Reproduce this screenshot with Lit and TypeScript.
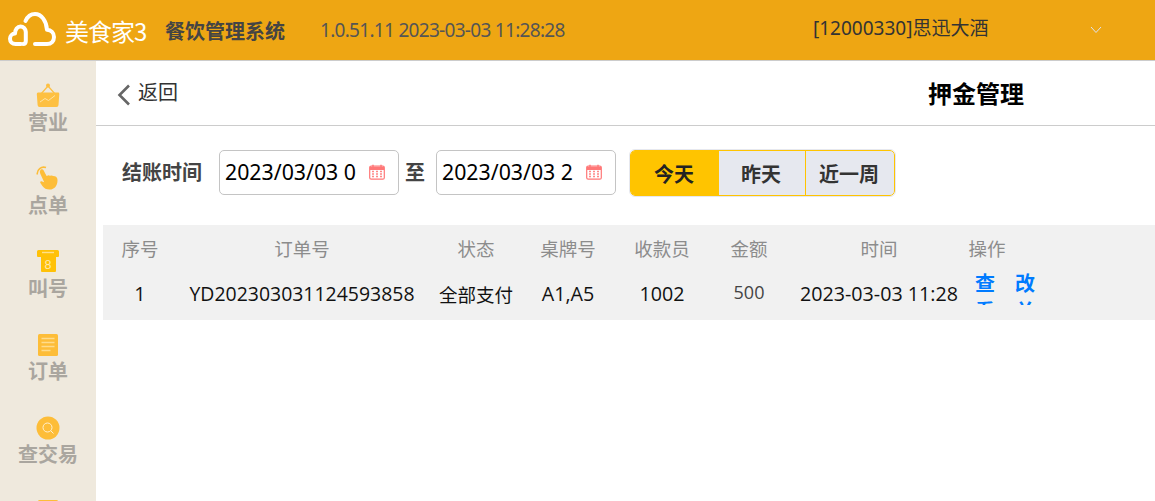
import { LitElement, html, css, svg } from "lit";
import { customElement } from "lit/decorators.js";

const cal = html`<svg class="cal" viewBox="0 0 16 16" width="16" height="16">
  <rect x="0.7" y="2" width="14.6" height="13.2" rx="1.5" fill="#fff" stroke="#f77" stroke-width="1.2"/>
  <path d="M1 2.5h14v3.5H1z" fill="#f77"/>
  <path d="M4 .8v2.6M12 .8v2.6" stroke="#f77" stroke-width="1.4"/>
  <path d="M3 7.6h2M7 7.6h2M11 7.6h2M3 10h2M7 10h2M11 10h2M3 12.6h2M7 12.6h2M11 12.6h2" stroke="#f88" stroke-width="1.5"/>
</svg>`;

const icons = [
  svg`<svg viewBox="0 0 26 26" width="26" height="26"><circle cx="13" cy="2.6" r="2" fill="#fdc042"/><path d="M13 3 5.5 11.5M13 3l7.5 8.5" stroke="#fdc042" stroke-width="1.2" fill="none"/><path d="M3 9.5h20a1.3 1.3 0 0 1 1.3 1.4l-.8 11.2a2 2 0 0 1-2 1.9H4.6a2 2 0 0 1-2-1.9L1.8 10.900A1.3 1.3 0 0 1 3 9.500z" fill="#fdc042"/><path d="M5 19l5-3.500 3.500 2 6.500-5" stroke="#ffe3a3" stroke-width="1" fill="none"/></svg>`,
  svg`<svg viewBox="0 0 26 26" width="26" height="26"><path d="M2.300 8.500A6.500 6.500 0 0 1 11 1.600" stroke="#fdbd38" stroke-width="1.600" fill="none"/><path d="M5.500 3.800c1.400-1 2.700-.4 3.300.9l2.800 5.300 2-.8 1.300.5 1.800-.3 1.500.7 1.700.1c1.800.5 2.600 2 2.600 4 0 5.500-3 9.300-7.800 9.300-3.500 0-5.500-1-7.300-3.500l-2-3.100c-.5-1 0-1.800 1.100-1.600l2.700 1-3.800-8.300c-.6-1.500-.8-3 0-3.700z" fill="#fdbd38"/></svg>`,
  svg`<svg viewBox="0 0 26 26" width="26" height="26"><path d="M2 2.500a1.500 1.500 0 0 1 1.500-1.500h19a1.500 1.500 0 0 1 1.500 1.500v4.500a1 1 0 0 1-1 1h-2v14a1 1 0 0 1-1 1H7a1 1 0 0 1-1-1V8H3a1 1 0 0 1-1-1z" fill="#ffc107"/><path d="M7 3.500h12" stroke="#ffe08a" stroke-width="1.400"/><text x="13" y="19.500" text-anchor="middle" font-size="12.500" fill="#ffe9ad" font-family="Liberation Sans">8</text></svg>`,
  svg`<svg viewBox="0 0 22 24" width="22" height="24"><rect x="1" y="1" width="20" height="22" rx="1.500" fill="#fdbd38"/><path d="M4.500 5.500h13M4.500 9.500h13M4.500 13.500h13M4.500 17.500h9" stroke="#ffdc8c" stroke-width="1.400"/></svg>`,
  svg`<svg viewBox="0 0 24 24" width="24" height="24"><circle cx="12" cy="12" r="11.500" fill="#fdbd38"/><circle cx="11.500" cy="11.500" r="4.500" fill="none" stroke="#fff0cf" stroke-width="1"/><path d="m14.700 14.700 2.800 2.800" stroke="#fff0cf" stroke-width="1"/></svg>`,
];

const nav = [
  { label: "营业", icon: icons[0] },
  { label: "点单", icon: icons[1] },
  { label: "叫号", icon: icons[2] },
  { label: "订单", icon: icons[3] },
  { label: "查交易", icon: icons[4] },
  { label: "", icon: icons[3] },
];

@customElement("app-root")
export class AppRoot extends LitElement {
  static styles = css`
    :host { display: block; width: 1155px; height: 501px; overflow: hidden; font-family: "Noto Sans", "Noto Sans CJK SC", sans-serif; background: #fff; }
    .top { box-sizing: border-box; background: #eea613; display: flex; align-items: center; border-bottom: 1px solid #ccc; height: 61px; }
    .logo { margin: 2px 0 0 7px; display: block; flex: none; }
    .brand { font-family: "Noto Sans CJK SC", sans-serif; font-weight: 400; font-size: 24px; letter-spacing: -1px; color: #fff; margin-left: 8px; width: 82px; white-space: nowrap; flex: none; }
    .sys { font-family: "Noto Sans CJK SC", sans-serif; font-weight: 700; font-size: 20px; color: #444; margin-left: 18px; width: 120px; white-space: nowrap; flex: none; }
    .ver { margin-left: 35px; font-size: 19px; color: #555; width: 493px; white-space: nowrap; letter-spacing: -.7px; flex: none; }
    .store { font-size: 19px; color: #333; width: 277px; white-space: nowrap; letter-spacing: 0; flex: none; margin-top: -6px; }
    .store b { font-weight: 400; font-family: "Noto Sans CJK SC", sans-serif; }
    .chev { display: block; flex: none; }
    .body { display: flex; height: 440px; }
    .side { width: 96px; flex: none; background: #efe9dd; overflow: hidden; display: flex; flex-direction: column; align-items: center; padding-top: 21px; box-sizing: border-box; }
    .item { height: 83px; flex: none; display: flex; flex-direction: column; align-items: center; width: 96px; }
    .ic { height: 27px; display: flex; align-items: center; justify-content: center; }
    .item span { font-family: "Noto Sans CJK SC", sans-serif; font-weight: 700; font-size: 20px; line-height: 26px; color: #aaa69f; }
    .main { flex: 1; min-width: 0; display: flex; flex-direction: column; }
    .title { height: 65px; flex: none; box-sizing: border-box; border-bottom: 1px solid #ccc; display: flex; align-items: center; }
    .back { display: flex; align-items: center; margin-left: 21px; font-family: "Noto Sans CJK SC", sans-serif; font-size: 20px; color: #333; width: 786px; }
    .back svg { margin-right: 7px; margin-top: 3px; }
    .back span { margin-top: -4px; }
    .title h1 { margin: -2px 0 0 25px; font-family: "Noto Sans CJK SC", sans-serif; font-weight: 700; font-size: 24px; color: #000; }
    .filter { display: flex; align-items: flex-start; height: 46px; margin-top: 24px; padding-left: 26px; flex: none; }
    .lbl { font-family: "Noto Sans CJK SC", sans-serif; font-size: 20px; font-weight: 700; color: #444; width: 97px; flex: none; line-height: 44px; }
    .to { font-family: "Noto Sans CJK SC", sans-serif; font-size: 20px; font-weight: 700; color: #444; width: 37px; box-sizing: border-box; padding-right: 5px; text-align: center; flex: none; line-height: 44px; }
    .date { width: 180px; height: 45px; box-sizing: border-box; border: 1px solid #c4c4c4; border-radius: 5px; display: flex; align-items: center; position: relative; padding: 0 0 3px 5px; font-size: 21.3px; color: #000; background: #fff; flex: none; white-space: nowrap; }
    .cal { position: absolute; left: 149px; top: 13px; }
    .btns { margin-left: 14px; display: flex; height: 46px; width: 265px; box-sizing: border-box; border: 1px solid #ffc400; border-radius: 5px; outline: 1px solid #e6e8ef; overflow: hidden; background: #e6e8ef; flex: none; }
    .btns div { display: flex; align-items: center; justify-content: center; box-sizing: border-box; padding-right: 2px; font-family: "Noto Sans CJK SC", sans-serif; font-weight: 700; font-size: 20px; color: #333; }
    .btns .b1 { width: 88px; background: #ffc400; color: #222; }
    .b2 { width: 87px; border-right: 1px solid #ffc400; }
    .b3 { flex: 1; }
    .table { margin: 29px 0 0 7px; background: #f1f1f1; height: 95px; display: grid; grid-template-columns: 74px 250px 98px 86px 102px 72px 188px 1fr; grid-template-rows: 45px 47px; align-content: start; align-items: center; justify-items: center; }
    .th { font-family: "Noto Sans CJK SC", sans-serif; font-size: 18.5px; color: #8c8c8c; white-space: nowrap; }
    .td { font-size: 19.7px; color: #111; white-space: nowrap; font-family: "Open Sans", "Noto Sans CJK SC", sans-serif; }
    .td.ord { font-size: 19.45px; }
    .td.cn { font-size: 18.5px; font-family: "Noto Sans CJK SC", sans-serif; }
    .op { justify-self: start; width: 28px; display: flex; justify-content: center; }
    .td.amt { color: #444; margin-top: -4px; font-size: 18px; }
    .ops { justify-self: start; display: flex; gap: 20px; height: 36px; overflow: hidden; margin: -1px 0 0 2px; align-self: start; }
    .ops a { width: 20px; font-family: "Noto Sans CJK SC", sans-serif; font-weight: 700; font-size: 20px; line-height: 28px; color: #007bff; word-break: break-all; display: block; }
  `;

  render() {
    return html`
      <div class="top">
        <svg class="logo" width="50" height="38" viewBox="0 0 50 38" fill="none" stroke="#fff" stroke-width="4" stroke-linecap="round" stroke-linejoin="round">
          <path d="M14 32H8.500C5.200 32 3 29.800 3 26.800c0-3 2.300-5.300 5-5.300 0-4 2.500-7 5.500-7 2.700 0 5 2.200 5.300 5.500v9c0 1.800-1 3-2.800 3"/>
          <path d="M28 32h12c4.300 0 7-3 7-7 0-4.200-3-7-7-7.200C39.500 9 34.500 2 28 2 24 2 20.500 4.500 18.500 9"/>
        </svg>
        <span class="brand">美食家3</span>
        <span class="sys">餐饮管理系统</span>
        <span class="ver">1.0.51.11 2023-03-03 11:28:28</span>
        <span class="store">[12000330]<b>思迅大酒</b></span>
        <svg class="chev" width="12" height="8" viewBox="0 0 12 8" fill="none" stroke="#dfe3ef" stroke-width="1"><path d="M1 1l5 5.500L11 1"/></svg>
      </div>
      <div class="body">
        <nav class="side">
          ${nav.map(
            (n) => html`<div class="item"><div class="ic">${n.icon}</div><span>${n.label}</span></div>`
          )}
        </nav>
        <div class="main">
          <div class="title">
            <div class="back">
              <svg width="14" height="22" viewBox="0 0 14 22" fill="none" stroke="#666" stroke-width="2.600"><path d="M12 1.500 2.500 11 12 20.500"/></svg>
              <span>返回</span>
            </div>
            <h1>押金管理</h1>
          </div>
          <div class="filter">
            <div class="lbl">结账时间</div>
            <div class="date">2023/03/03 0${cal}</div>
            <div class="to">至</div>
            <div class="date">2023/03/03 2${cal}</div>
            <div class="btns">
              <div class="b1">今天</div>
              <div class="b2">昨天</div>
              <div class="b3">近一周</div>
            </div>
          </div>
          <div class="table">
            <div class="th">序号</div>
            <div class="th">订单号</div>
            <div class="th">状态</div>
            <div class="th">桌牌号</div>
            <div class="th">收款员</div>
            <div class="th">金额</div>
            <div class="th">时间</div>
            <div class="th op">操作</div>
            <div class="td">1</div>
            <div class="td ord">YD202303031124593858</div>
            <div class="td cn">全部支付</div>
            <div class="td">A1,A5</div>
            <div class="td">1002</div>
            <div class="td amt">500</div>
            <div class="td">2023-03-03 11:28</div>
            <div class="ops"><a>查看</a><a>改单</a></div>
          </div>
        </div>
      </div>
    `;
  }
}
